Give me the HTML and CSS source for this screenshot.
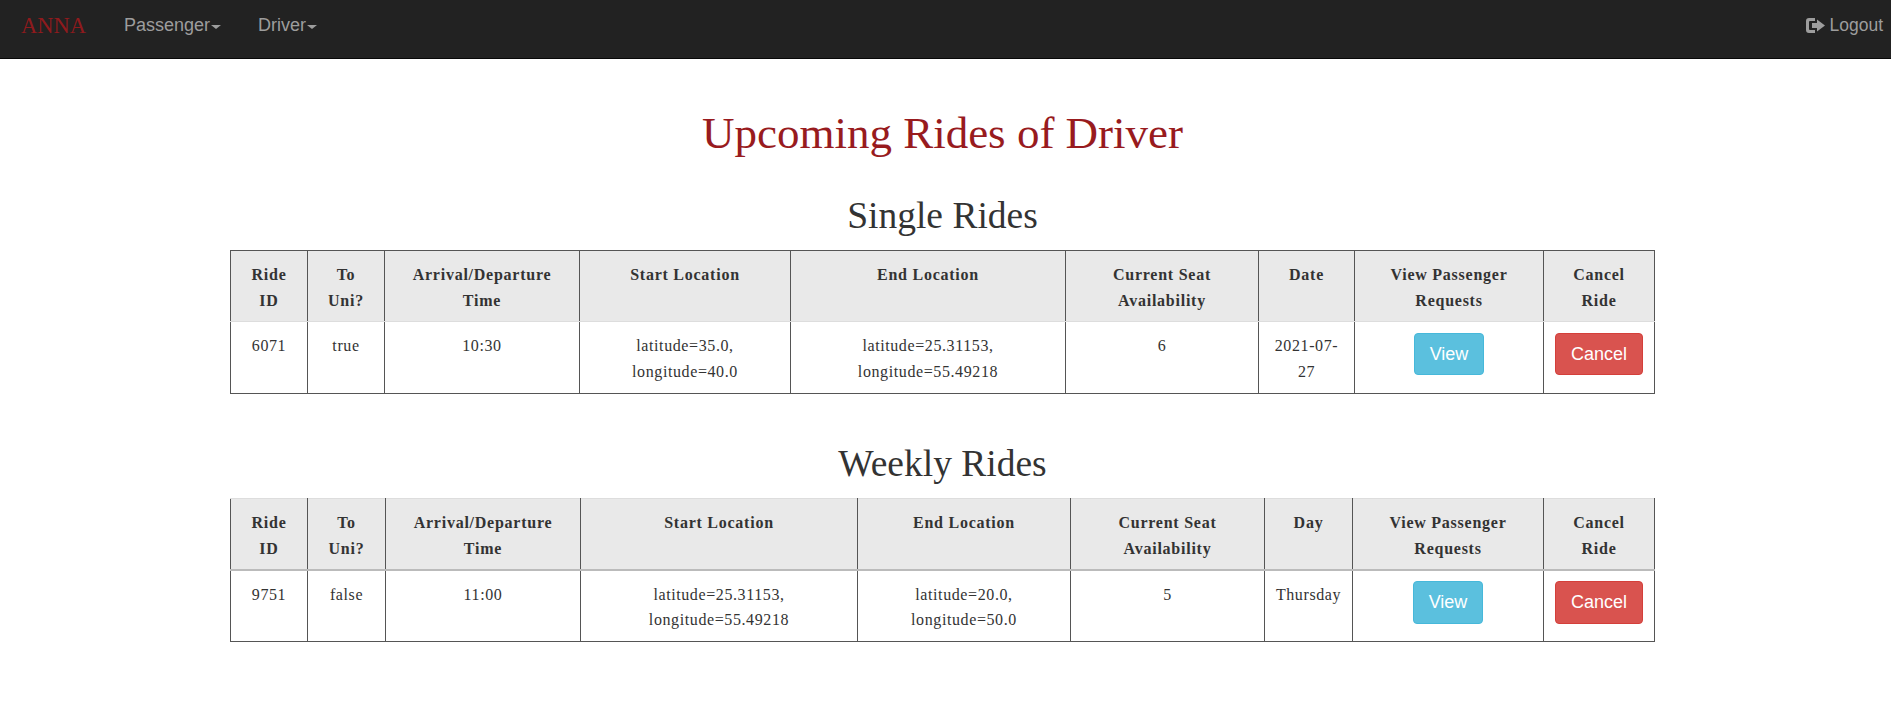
FILE: index.html
```html
<!DOCTYPE html>
<html lang="en">
<head>
  <meta charset="UTF-8">
  <title>Upcoming Rides of Driver</title>
  <link rel="stylesheet" href="styles.css">
</head>
<body>
  <nav class="navbar">
    <a class="brand" href="#">ANNA</a>
    <a class="nav-link" href="#">Passenger<span class="caret"></span></a>
    <a class="nav-link" href="#">Driver<span class="caret"></span></a>
    <a class="nav-link logout" href="#">
      <svg class="logout-icon" viewBox="0 0 19 15" width="19" height="15">
        <path fill="currentColor" d="M3 0h6v3H4Q3 3 3 4v7q0 1 1 1h5v3H3q-3 0-3-3V3q0-3 3-3z"/>
        <path fill="currentColor" d="M6 5h5V1.500L19 7.500l-8 6V10H6z"/>
      </svg>
      Logout
    </a>
  </nav>

  <main class="content">
    <h1 class="page-title">Upcoming Rides of Driver</h1>

    <h2 class="section-title">Single Rides</h2>
    <table class="rides rides-single">
      <thead>
        <tr>
          <th>Ride ID</th>
          <th>To Uni?</th>
          <th>Arrival/Departure Time</th>
          <th>Start Location</th>
          <th>End Location</th>
          <th>Current Seat Availability</th>
          <th>Date</th>
          <th>View Passenger Requests</th>
          <th>Cancel Ride</th>
        </tr>
      </thead>
      <tbody>
        <tr>
          <td>6071</td>
          <td>true</td>
          <td>10:30</td>
          <td>latitude=35.0, longitude=40.0</td>
          <td>latitude=25.31153, longitude=55.49218</td>
          <td>6</td>
          <td>2021-07-27</td>
          <td class="action"><a class="btn btn-info" href="#">View</a></td>
          <td class="action"><a class="btn btn-danger" href="#">Cancel</a></td>
        </tr>
      </tbody>
    </table>

    <h2 class="section-title section-weekly">Weekly Rides</h2>
    <table class="rides rides-weekly">
      <thead>
        <tr>
          <th>Ride ID</th>
          <th>To Uni?</th>
          <th>Arrival/Departure Time</th>
          <th>Start Location</th>
          <th>End Location</th>
          <th>Current Seat Availability</th>
          <th>Day</th>
          <th>View Passenger Requests</th>
          <th>Cancel Ride</th>
        </tr>
      </thead>
      <tbody>
        <tr>
          <td>9751</td>
          <td>false</td>
          <td>11:00</td>
          <td>latitude=25.31153, longitude=55.49218</td>
          <td>latitude=20.0, longitude=50.0</td>
          <td>5</td>
          <td>Thursday</td>
          <td class="action"><a class="btn btn-info" href="#">View</a></td>
          <td class="action"><a class="btn btn-danger" href="#">Cancel</a></td>
        </tr>
      </tbody>
    </table>
  </main>
</body>
</html>
```

FILE: styles.css
```css
* {
  box-sizing: border-box;
}
body {
  margin: 0;
  font-family: "Liberation Serif", "Times New Roman", serif;
  font-size: 16px;
  color: #333;
  background: #fff;
}
a {
  text-decoration: none;
}

.navbar {
  display: flex;
  align-items: center;
  height: 59px;
  padding: 0 8px 7px 21px;
  background: #222;
  border-bottom: 1px solid #080808;
}
.brand {
  margin-right: 38px;
  font-size: 22.5px;
  color: #8f1a1d;
}
.nav-link {
  display: flex;
  align-items: center;
  margin-right: 37px;
  font-family: "Liberation Sans", Arial, sans-serif;
  font-size: 18px;
  color: #9d9d9d;
}
.logout {
  margin: 0 0 0 auto;
  font-size: 17.500px;
}
.logout-icon {
  margin-right: 4px;
}
.caret {
  width: 0;
  height: 0;
  margin-left: 1px;
  margin-top: 2px;
  border-top: 4.500px solid #9d9d9d;
  border-left: 5px solid transparent;
  border-right: 5px solid transparent;
}

.content {
  width: 1885px;
}
.page-title {
  margin: 46px 0 0;
  font-size: 45px;
  line-height: 56px;
  font-weight: normal;
  text-align: center;
  color: #981b1e;
}
.section-title {
  margin: 32px 0 0;
  font-size: 37.500px;
  line-height: 46px;
  font-weight: normal;
  text-align: center;
}
.section-weekly {
  margin-top: 47px;
}

.rides {
  width: 1424px;
  margin: 11px auto 0;
  border-collapse: collapse;
  table-layout: fixed;
  letter-spacing: 0.6px;
}
.rides th,
.rides td {
  padding: 11px 10px 6px;
  line-height: 25.600px;
  text-align: center;
  vertical-align: top;
  border: 1px solid #555;
}
.rides th {
  height: 71px;
  padding-left: 16px;
  padding-right: 16px;
  font-weight: bold;
  letter-spacing: 0.75px;
  background: #e9e9e9;
  border-bottom-color: #ddd;
}
.rides td {
  height: 72px;
}
.rides-weekly th {
  border-top-color: #ddd;
  border-bottom: 2px solid #bbb;
}
.rides .action {
  padding: 11px 10px 0;
}
.rides-weekly .action {
  padding-top: 10px;
}
.rides-weekly .btn {
  padding-bottom: 9px;
}

.rides-single th:nth-child(1) { width: 77px; }
.rides-single th:nth-child(2) { width: 77px; }
.rides-single th:nth-child(3) { width: 195px; }
.rides-single th:nth-child(4) { width: 211px; }
.rides-single th:nth-child(5) { width: 275px; }
.rides-single th:nth-child(6) { width: 193px; }
.rides-single th:nth-child(7) { width: 96px; }
.rides-single th:nth-child(8) { width: 189px; }
.rides-single th:nth-child(9) { width: 111px; }

.rides-weekly th:nth-child(1) { width: 77px; }
.rides-weekly th:nth-child(2) { width: 78px; }
.rides-weekly th:nth-child(3) { width: 195px; }
.rides-weekly th:nth-child(4) { width: 277px; }
.rides-weekly th:nth-child(5) { width: 213px; }
.rides-weekly th:nth-child(6) { width: 194px; }
.rides-weekly th:nth-child(7) { width: 88px; }
.rides-weekly th:nth-child(8) { width: 191px; }
.rides-weekly th:nth-child(9) { width: 111px; }

.btn {
  display: inline-block;
  padding: 8px 15px;
  font-family: "Liberation Sans", Arial, sans-serif;
  font-size: 18px;
  line-height: 24px;
  letter-spacing: 0;
  color: #fff;
  border: 1px solid transparent;
  border-radius: 4px;
}
.btn-info {
  background: #5bc0de;
  border-color: #46b8da;
}
.btn-danger {
  background: #d9534f;
  border-color: #d43f3a;
}
```
